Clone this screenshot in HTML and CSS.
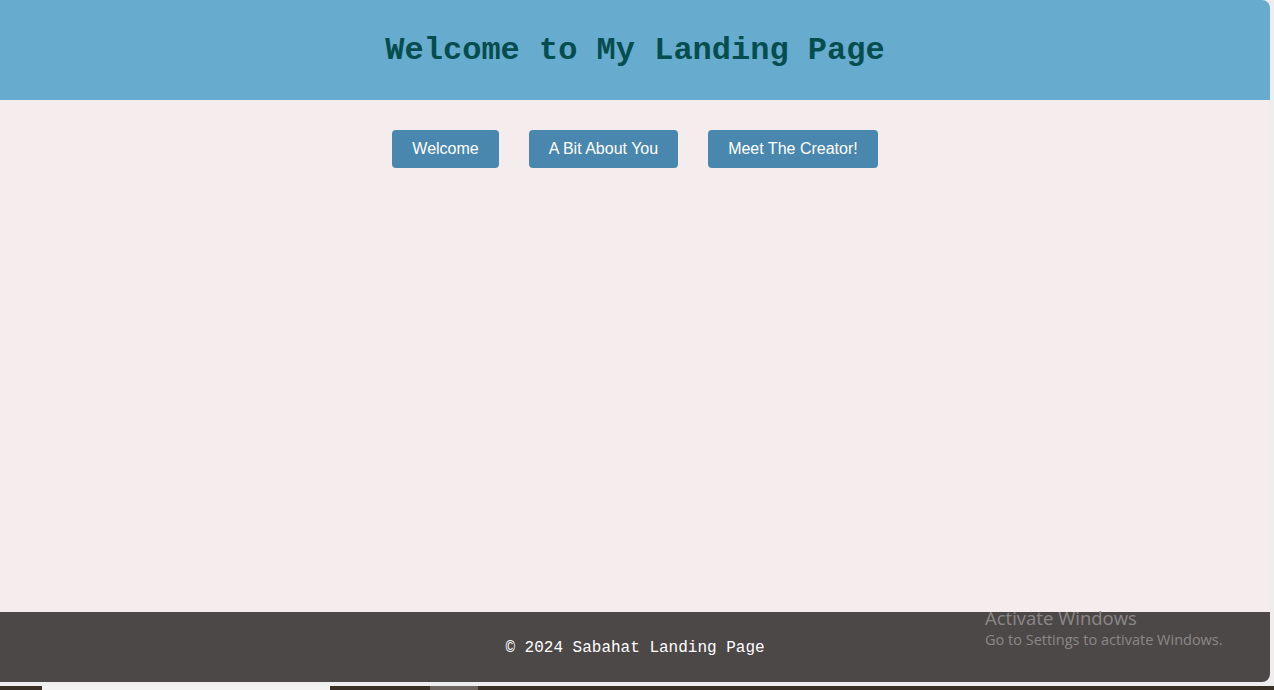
FILE: index.html
```html
<!DOCTYPE html>
<html lang="en">
<head>
<meta charset="utf-8">
<title>Landing Page</title>
<link rel="stylesheet" href="styles.css">
</head>
<body>
<div class="window">
  <header class="site-header">
    <h1 class="title">Welcome to My Landing Page</h1>
  </header>
  <main class="content">
    <nav class="nav">
      <button class="btn">Welcome</button>
      <button class="btn">A Bit About You</button>
      <button class="btn">Meet The Creator!</button>
    </nav>
  </main>
  <footer class="site-footer">
    <p class="copy">© 2024 Sabahat Landing Page</p>
  </footer>
  <div class="watermark">
    <div class="wm-title">Activate Windows</div>
    <div class="wm-sub">Go to Settings to activate Windows.</div>
  </div>
</div>
<div class="taskbar">
  <span class="tb-a"></span><span class="tb-b"></span><span class="tb-c"></span><span class="tb-d"></span><span class="tb-e"></span>
</div>
</body>
</html>
```
FILE: styles.css
```css
html, body {
  margin: 0;
  padding: 0;
}
body {
  width: 1274px;
  height: 690px;
  background: #eeeeee;
  overflow: hidden;
}
.window {
  position: relative;
  width: 1270px;
  height: 682px;
  display: flex;
  flex-direction: column;
  border-radius: 0 8px 8px 0;
  overflow: hidden;
}
.site-header {
  height: 100px;
  background: #67acce;
  display: flex;
  align-items: center;
  justify-content: center;
}
.title {
  margin: 0;
  font-family: "Liberation Mono", "Courier New", monospace;
  font-weight: bold;
  font-size: 32px;
  color: #064d4f;
}
.content {
  flex: 1;
  background: #f5ecee;
  padding-top: 30px;
}
.nav {
  display: flex;
  justify-content: center;
  gap: 30px;
}
.btn {
  height: 38px;
  padding: 0 20px;
  border: none;
  border-radius: 4px;
  background: #4a87ae;
  color: #ffffff;
  font-family: "Liberation Sans", Arial, sans-serif;
  font-size: 16px;
}
.site-footer {
  height: 70px;
  background: #4d4848;
  display: flex;
  align-items: center;
  justify-content: center;
}
.copy {
  margin: 0;
  padding-top: 2px;
  font-family: "Liberation Mono", "Courier New", monospace;
  font-size: 16px;
  color: #ffffff;
}
.watermark {
  position: absolute;
  left: 985px;
  top: 606px;
  font-family: "Open Sans", "Noto Sans", sans-serif;
  color: #8c8787;
}
.wm-title {
  font-size: 18.5px;
  line-height: 24px;
}
.wm-sub {
  font-size: 14.5px;
  line-height: 20px;
}
.taskbar {
  margin-top: 4px;
  height: 4px;
  display: flex;
  background: #3a3025;
}
.tb-a { width: 42px; }
.tb-b { width: 288px; background: #f2f2f2; }
.tb-c { width: 100px; }
.tb-d { width: 48px; background: #6b645f; }
.tb-e { flex: 1; }
```
